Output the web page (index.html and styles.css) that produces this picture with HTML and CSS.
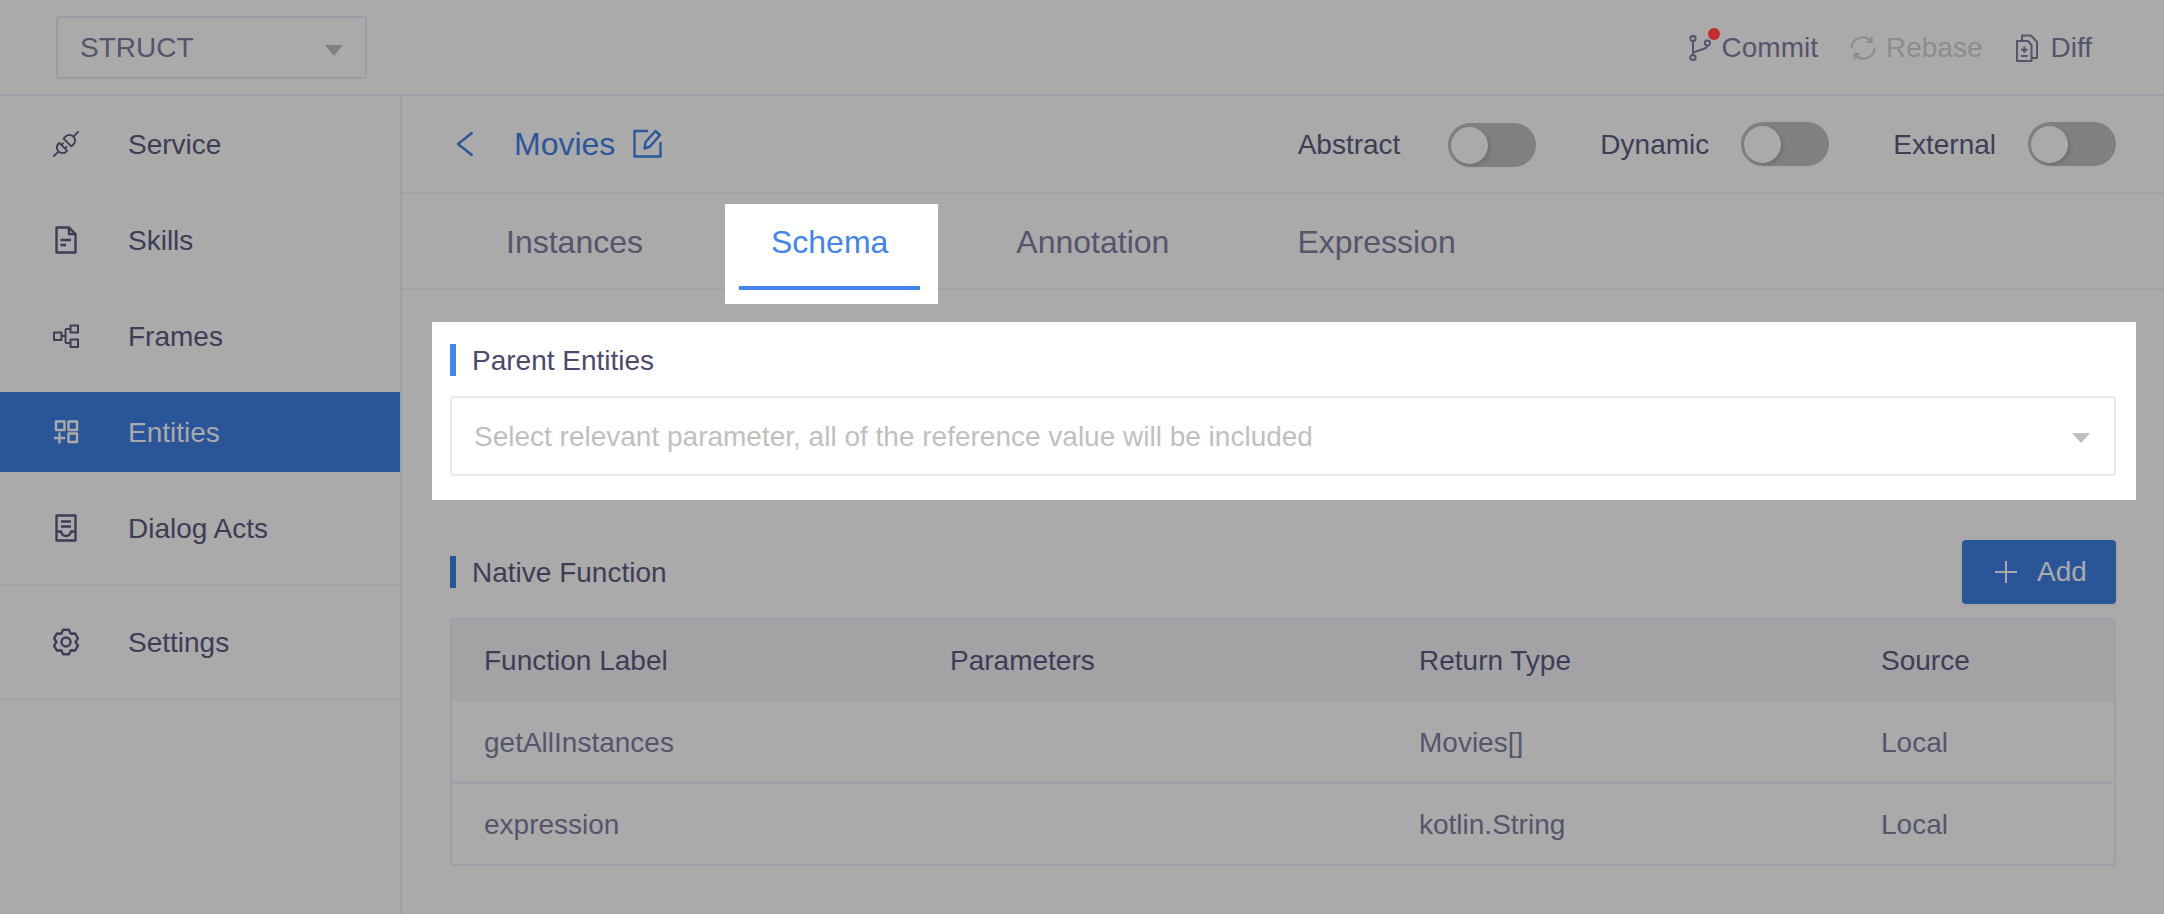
FILE: index.html
```html
<!DOCTYPE html>
<html lang="en">
<head>
<meta charset="utf-8">
<title>Movies - Schema</title>
<link rel="stylesheet" href="styles.css">
</head>
<body>
<div class="app">
  <header class="topbar">
    <div class="domain-select">
      <span>STRUCT</span>
      <i class="caret caret-dark"></i>
    </div>
    <nav class="actions">
      <div class="action action-commit">
        <span class="git-wrap">
          <svg class="ico ico-git" width="22" height="26" viewBox="0 0 22 26"><circle cx="4" cy="3.5" r="2.6"/><circle cx="4" cy="22.5" r="2.6"/><circle cx="18.5" cy="8" r="2.6"/><path d="M4 6.1V19.9M4 17.5L14.5 14Q18.5 12.6 18.5 10.6"/></svg>
          <b class="dot"></b>
        </span>
        <span>Commit</span>
      </div>
      <div class="action action-rebase">
        <svg class="ico ico-muted" width="26" height="26" viewBox="0 0 26 26"><path d="M1.5 13A11 11 0 0 1 21 6.5M24.5 13A11 11 0 0 1 5 19.5M21.6 1.5V7H16.500M4.400 24.500V19H9.500"/></svg>
        <span>Rebase</span>
      </div>
      <div class="action action-diff">
        <svg class="ico" width="22" height="28" viewBox="0 0 22 28"><path d="M1 7H12L15.500 11V27H1ZM6 7V1.500H15L21 8V24H15.500M8.300 12.500V19M5 15.700H11.500M5 22H11.500"/></svg>
        <span>Diff</span>
      </div>
    </nav>
  </header>

  <div class="body">
    <aside class="sidebar">
      <div class="nav-group nav-group-first">
        <div class="nav-item">
          <svg class="ico ico-plug" width="26" height="26" viewBox="0 0 26 26"><g transform="translate(13 13) rotate(-45)"><path d="M-18 0H-10.500M-4 -5.500H-5.500A5 5.500 0 0 0 -5.500 5.500H-4ZM-4 -2.500H-1M-4 2.500H-1M2 -5.500H5.500A5 5.500 0 0 1 5.500 5.500H2ZM10.500 0H18"/></g></svg>
          <span>Service</span>
        </div>
        <div class="nav-item">
          <svg class="ico" width="22" height="28" viewBox="0 0 22 28"><path d="M1.500 1.500H14L20.500 8V26.500H1.500ZM14 1.500V8H20.500M5.500 14H16M5.500 19H11"/></svg>
          <span>Skills</span>
        </div>
        <div class="nav-item">
          <svg class="ico ico-thin" width="26" height="24" viewBox="0 0 26 24"><path d="M1 8.500H8.500V16H1ZM17.500 1.500H25V8.500H17.500ZM17.500 15.500H25V23H17.500ZM8.500 12H12.500M12.500 5H17.500M12.500 19H17.500M12.500 5V19"/></svg>
          <span>Frames</span>
        </div>
        <div class="nav-item nav-item-active">
          <svg class="ico ico-light" width="26" height="24" viewBox="0 0 26 24"><path d="M3 1.500H11.500V10H3ZM15.500 1.500H24V10H15.500ZM15.500 13.500H24V22H15.500ZM1 18H12M6.500 12.500V23.500"/></svg>
          <span>Entities</span>
        </div>
        <div class="nav-item">
          <svg class="ico" width="22" height="28" viewBox="0 0 22 28"><path d="M1.500 1.500H20.500V26.500H1.500ZM6 7.500H16M6 12.500H16M1.500 17.500H6Q7 22 11 22Q15 22 16 17.500H20.500"/></svg>
          <span>Dialog Acts</span>
        </div>
      </div>
      <div class="nav-group">
        <div class="nav-item">
          <svg class="ico" width="26" height="28" viewBox="0 0 26 28"><path d="M10.190 1.820L15.810 1.820L17.750 5.770L22.140 5.480L24.950 10.350L22.500 14L24.950 17.650L22.140 22.520L17.750 22.230L15.810 26.180L10.190 26.180L8.250 22.230L3.860 22.520L1.050 17.650L3.500 14L1.050 10.350L3.860 5.480L8.250 5.770Z"/><circle cx="13" cy="14" r="4.500"/></svg>
          <span>Settings</span>
        </div>
      </div>
    </aside>

    <main class="main">
      <div class="titlebar">
        <svg class="ico ico-blue back" width="18" height="26" viewBox="0 0 18 26"><path d="M16.500 1.500L2 13L16.500 24.500"/></svg>
        <h1 class="title">Movies</h1>
        <svg class="ico ico-blue edit" width="29" height="29" viewBox="0 0 29 29"><path d="M15 2H1.500V27.500H27.500V13M11.500 19.500L12.500 13L22.500 2L27 6L17 17.500Z"/></svg>
        <div class="toggles">
          <div class="toggle toggle-first"><span class="toggle-label">Abstract</span><span class="switch"><i class="knob"></i></span></div>
          <div class="toggle"><span class="toggle-label">Dynamic</span><span class="switch"><i class="knob"></i></span></div>
          <div class="toggle"><span class="toggle-label">External</span><span class="switch"><i class="knob"></i></span></div>
        </div>
      </div>

      <div class="tabs">
        <div class="tab">Instances</div>
        <div class="tab tab-active"><span class="tab-text">Schema</span></div>
        <div class="tab">Annotation</div>
        <div class="tab">Expression</div>
      </div>

      <section class="spot">
        <h2 class="section-title section-title-lit">Parent Entities</h2>
        <div class="picker">
          <span>Select relevant parameter, all of the reference value will be included</span>
          <i class="caret caret-light"></i>
        </div>
      </section>

      <div class="native-head">
        <h2 class="section-title">Native Function</h2>
        <button class="add-btn" type="button">
          <svg class="plus" width="22" height="22" viewBox="0 0 22 22"><path d="M11 0V22M0 11H22"/></svg>
          <span>Add</span>
        </button>
      </div>

      <table class="fn-table">
        <colgroup>
          <col class="col-a"><col class="col-b"><col class="col-c"><col>
        </colgroup>
        <thead>
          <tr><th>Function Label</th><th>Parameters</th><th>Return Type</th><th>Source</th></tr>
        </thead>
        <tbody>
          <tr><td>getAllInstances</td><td></td><td>Movies[]</td><td>Local</td></tr>
          <tr><td>expression</td><td></td><td>kotlin.String</td><td>Local</td></tr>
        </tbody>
      </table>
    </main>
  </div>
</div>
</body>
</html>
```

FILE: styles.css
```css
* { box-sizing: border-box; }

html, body {
  margin: 0;
  height: 100%;
  background: #aaaaaa;
  overflow: hidden;
}

body {
  font-family: "Liberation Sans", Arial, sans-serif;
  font-size: 28px;
  line-height: 32px;
  color: #3d3d55;
}

h1, h2 { margin: 0; font-weight: 400; }

.app {
  display: flex;
  flex-direction: column;
  height: 914px;
}

/* top bar */
.topbar {
  flex: none;
  height: 96px;
  display: flex;
  align-items: center;
  justify-content: space-between;
  padding: 0 72px 0 56px;
  border-bottom: 2px solid #9f9fa9;
}

.domain-select {
  width: 311px;
  height: 63px;
  margin-top: 1px;
  display: flex;
  align-items: center;
  justify-content: space-between;
  padding: 0 22px;
  border: 2px solid #9c9ca6;
  border-radius: 4px;
  color: #55556b;
}

.caret {
  display: block;
  width: 0;
  height: 0;
  border-style: solid;
  border-color: transparent;
  border-width: 11px 9px 0;
}
.caret-dark { border-top-color: #808080; margin-top: 6px; }
.caret-light { border-top-color: #bfbfbf; border-width: 10px 9px 0; margin-top: 2px; }

.actions {
  display: flex;
  align-items: center;
  color: #55556b;
  margin-top: 1px;
}
.action { display: flex; align-items: center; }
.action-commit { gap: 11px; }
.action-rebase { gap: 10px; margin-left: 32px; color: #8c8c8c; }
.action-diff { gap: 13px; margin-left: 33px; }

.git-wrap { position: relative; display: block; height: 26px; }
.ico-git { display: block; }
.dot {
  position: absolute;
  top: -7px;
  left: 19px;
  width: 12px;
  height: 12px;
  border-radius: 50%;
  background: #c22e2e;
}

.ico {
  flex: none;
  fill: none;
  stroke: #3d3d55;
  stroke-width: 2.4;
  stroke-linejoin: round;
}
.ico-thin { stroke-width: 2; }
.ico-plug { stroke-width: 1.8; }
.action .ico { stroke: #55556b; stroke-width: 2; }
.action .ico-muted { stroke: #8c8c8c; }
.ico-light { stroke: #aaaaaa; }
.ico-blue { stroke: #2b579d; }

/* layout */
.body { flex: 1; display: flex; min-height: 0; }

.sidebar {
  flex: none;
  width: 402px;
  border-right: 2px solid #9f9fa9;
}
.nav-group {
  display: flex;
  flex-direction: column;
  gap: 16px;
  padding: 16px 0;
  border-bottom: 2px solid #a3a3a8;
}
.nav-group-first { padding-top: 8px; }

.nav-item {
  position: relative;
  height: 80px;
  display: flex;
  align-items: center;
  padding: 2px 0 0 128px;
}
.nav-item .ico {
  position: absolute;
  left: 66px;
  top: 50%;
  transform: translate(-50%, -50%);
}
.nav-item-active { background: #2a5599; color: #aaaaaa; }

.main { flex: 1; min-width: 0; padding: 0 48px; }

/* title bar */
.titlebar {
  height: 98px;
  margin: 0 -48px;
  padding: 0 48px 0 54px;
  display: flex;
  align-items: center;
  border-bottom: 2px solid #a3a3a6;
}
.title {
  margin-left: 40px;
  font-size: 32px;
  color: #2b579d;
}
.edit { margin-left: 18px; margin-top: -1px; }
.back { margin-top: -1px; }

.toggles { margin-left: auto; display: flex; align-items: center; gap: 64px; }
.toggle { display: flex; align-items: center; gap: 32px; }
.toggle-label { padding-top: 2px; }
.toggle-first { gap: 48px; margin-top: 2px; }
.toggle-first .toggle-label { padding-top: 0; }
.switch {
  display: flex;
  align-items: center;
  width: 88px;
  height: 44px;
  padding: 0 3px;
  border-radius: 22px;
  background: #808080;
}
.knob {
  display: block;
  width: 37px;
  height: 37px;
  border-radius: 50%;
  background: #aaaaaa;
  box-shadow: 2px 2px 4px rgba(0, 0, 0, 0.14);
}

/* tabs */
.tabs {
  height: 96px;
  margin: 0 -48px;
  padding-left: 72px;
  display: flex;
  gap: 64px;
  border-bottom: 2px solid #a3a3a6;
  font-size: 32px;
  color: #55556b;
}
.tab {
  position: relative;
  height: 96px;
  padding: 32px 32px 0;
}
.tab-active { color: #4284ee; }
.tab-active::before {
  content: "";
  position: absolute;
  left: -14px;
  right: -18px;
  top: 10px;
  bottom: -14px;
  background: #ffffff;
}
.tab-active::after {
  content: "";
  position: absolute;
  left: 0;
  right: 0;
  bottom: 0;
  height: 4px;
  background: #4284ee;
  z-index: 2;
}
.tab-text { position: relative; z-index: 1; }

/* highlighted section */
.spot {
  margin: 32px -20px 0 -18px;
  padding: 22px 20px 24px 18px;
  background: #ffffff;
}
.section-title {
  height: 32px;
  font-size: 28px;
  line-height: 30px;
  padding: 2px 0 0 16px;
  border-left: 6px solid #2a5599;
  color: #3d3d55;
}
.section-title-lit { border-left-color: #4284ee; color: #4a4a6a; }

.picker {
  margin-top: 20px;
  height: 80px;
  display: flex;
  align-items: center;
  justify-content: space-between;
  padding: 2px 24px 0 22px;
  border: 2px solid #e9e9f6;
  border-radius: 4px;
  color: #bfbfbf;
}

/* native functions */
.native-head {
  margin-top: 40px;
  display: flex;
  align-items: center;
  justify-content: space-between;
}
.add-btn {
  width: 154px;
  height: 64px;
  display: flex;
  align-items: center;
  gap: 20px;
  padding: 0 0 0 33px;
  border: 0;
  border-radius: 4px;
  background: #2a5599;
  color: #aaaaaa;
  font: inherit;
  box-shadow: 0 2px 4px rgba(0, 0, 0, 0.06);
}
.plus { flex: none; fill: none; stroke: #aaaaaa; stroke-width: 2; }

.fn-table {
  width: 100%;
  margin-top: 14px;
  table-layout: fixed;
  border-collapse: separate;
  border-spacing: 0;
  border: 2px solid #9f9fa9;
  border-radius: 4px;
}
.col-a { width: 466px; }
.col-b { width: 469px; }
.col-c { width: 462px; }

.fn-table th,
.fn-table td {
  padding: 2px 0 0 32px;
  text-align: left;
  font-weight: 400;
}
.fn-table th {
  height: 82px;
  background: #a3a3a6;
  border-bottom: 2px solid #a5a5a8;
  color: #3d3d55;
}
.fn-table td {
  height: 82px;
  color: #55556b;
}
.fn-table tbody tr:first-child td { border-bottom: 2px solid #a0a0aa; }
.fn-table tbody tr:last-child td { height: 80px; }
```
